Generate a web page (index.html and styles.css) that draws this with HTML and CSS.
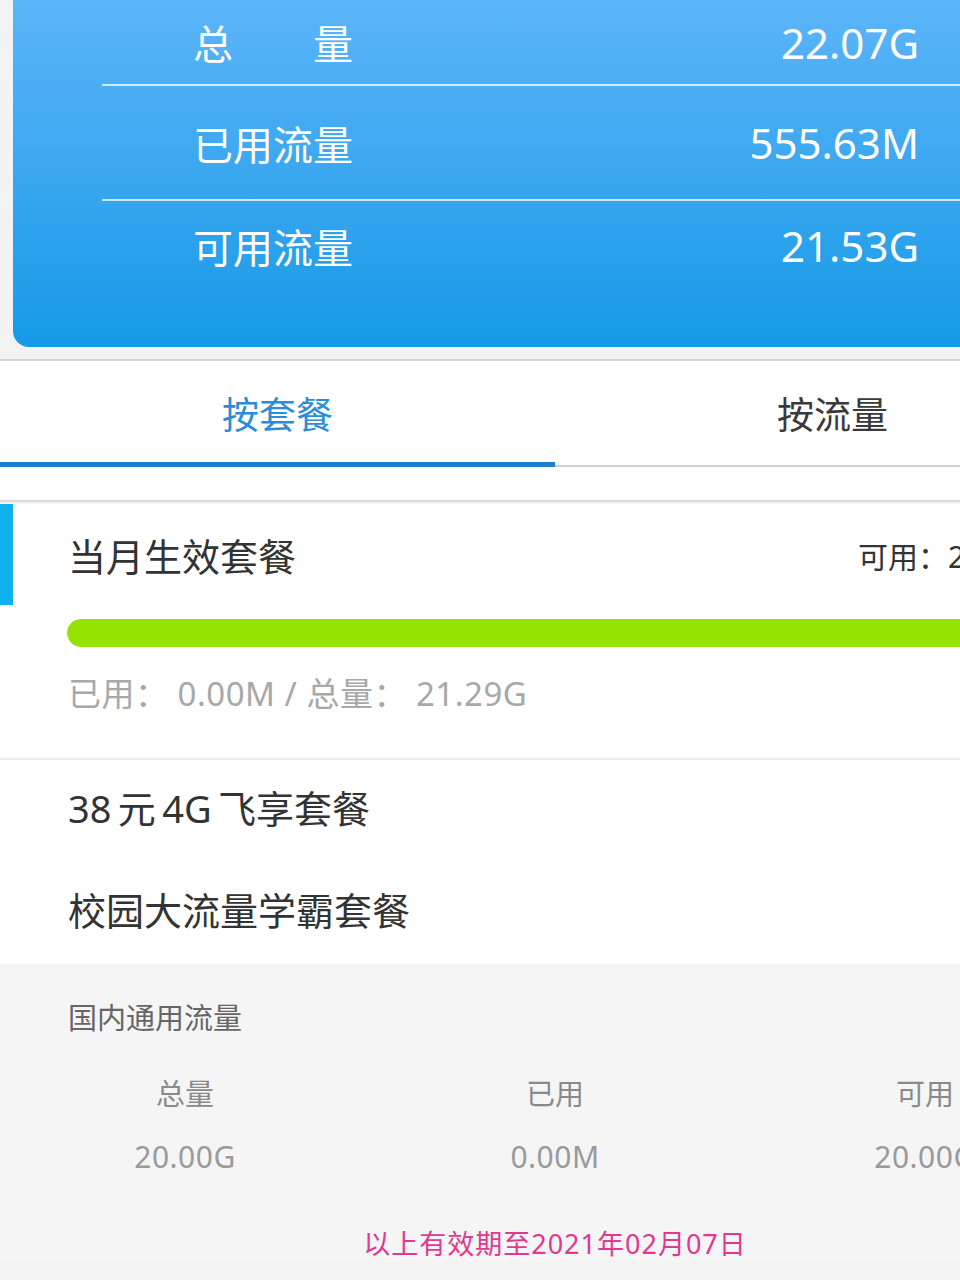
FILE: index.html
```html
<!DOCTYPE html>
<html lang="zh">
<head>
    <meta charset="UTF-8">
    <meta name="viewport" content="width=device-width, initial-scale=1.0">
    <title>流量查询</title>
    <link rel="stylesheet" href="styles.css">
</head>
<body>
    <div class="page">
        <!-- 顶部汇总卡片 -->
        <div class="summary">
            <div class="summary-card">
                <div class="stat-row stat-first">
                    <span class="stat-label">总　　量</span>
                    <span class="stat-value">22.07G</span>
                </div>
                <div class="stat-row stat-mid">
                    <span class="stat-label">已用流量</span>
                    <span class="stat-value">555.63M</span>
                </div>
                <div class="stat-row stat-last">
                    <span class="stat-label">可用流量</span>
                    <span class="stat-value">21.53G</span>
                </div>
            </div>
        </div>

        <!-- 切换标签 -->
        <div class="tabs">
            <div class="tab active">按套餐</div>
            <div class="tab">按流量</div>
        </div>
        <div class="tabs-gap"></div>

        <!-- 当月生效套餐 -->
        <div class="plan">
            <div class="plan-head">
                <span class="plan-title">当月生效套餐</span>
                <span class="plan-avail">可用：21.29G</span>
            </div>
            <div class="progress"><div class="progress-fill" style="width: 100%"></div></div>
            <div class="plan-detail">已用： 0.00M / 总量： 21.29G</div>
        </div>

        <div class="plan-list">
            <div class="plan-item">38&#x2006;元&#x2006;4G&#x2006;飞享套餐</div>
            <div class="plan-item">校园大流量学霸套餐</div>
        </div>

        <!-- 流量明细 -->
        <div class="detail">
            <div class="detail-title">国内通用流量</div>
            <div class="detail-grid">
                <div class="detail-label">总量</div>
                <div class="detail-label">已用</div>
                <div class="detail-label">可用</div>
                <div class="detail-value">20.00G</div>
                <div class="detail-value">0.00M</div>
                <div class="detail-value">20.00G</div>
            </div>
            <div class="expire">以上有效期至2021年02月07日</div>
        </div>
    </div>
</body>
</html>
```

FILE: styles.css
```css
* {
    margin: 0;
    padding: 0;
    box-sizing: border-box;
    font-family: 'Noto Sans', 'Noto Sans CJK SC', sans-serif;
}

:root {
    --blue: #2a8dd6;
    --text-dark: #333333;
    --text-gray: #a8a8a8;
    --bg-gray: #f3f3f3;
}

body {
    width: 960px;
    height: 1280px;
    overflow: hidden;
    background: var(--bg-gray);
}

.page {
    width: 1110px;
}

/* 顶部卡片 */
.summary {
    padding: 0 0 12px 13px;
    background: var(--bg-gray);
    border-bottom: 2px solid #d6d6d6;
}

.summary-card {
    background: linear-gradient(180deg, #5cb5f8 0%, #3aa7f0 50%, #169ae6 100%);
    border-radius: 0 0 16px 16px;
    padding: 0 0 57px 89px;
    color: #ffffff;
}

.stat-row {
    display: flex;
    justify-content: space-between;
    align-items: center;
    padding: 0 191px 0 91px;
}

.stat-first {
    height: 84px;
}

.stat-mid {
    height: 117px;
    border-top: 2px solid rgba(255, 255, 255, 0.75);
    border-bottom: 2px solid rgba(255, 255, 255, 0.75);
}

.stat-last {
    height: 89px;
}

.stat-label {
    font-size: 40px;
}

.stat-value {
    font-size: 42px;
}

/* 标签 */
.tabs {
    display: flex;
    background: #ffffff;
    height: 106px;
}

.tab {
    flex: 1;
    display: flex;
    align-items: center;
    justify-content: center;
    font-size: 37px;
    color: #3a3a3a;
    border-bottom: 2px solid #cfcfcf;
}

.tab.active {
    color: var(--blue);
    border-bottom: 5px solid #1b7fcf;
    padding-top: 3px;
}

.tabs-gap {
    height: 35px;
    background: #ffffff;
    border-bottom: 2px solid #dcdcdc;
}

/* 当月套餐 */
.plan {
    background: #ffffff;
    padding-bottom: 44px;
    border-bottom: 2px solid #ebebeb;
}

.plan-head {
    display: flex;
    justify-content: space-between;
    align-items: center;
    height: 101px;
    margin-top: 2px;
    padding: 0 0 0 55px;
    border-left: 13px solid #0fb2ee;
}

.plan-title {
    font-size: 38px;
    color: var(--text-dark);
}

.plan-avail {
    font-size: 30px;
    color: var(--text-dark);
    width: 252px;
}

.progress {
    margin: 14px 0 0 67px;
    height: 28px;
    border-radius: 14px;
    background: #eeeeee;
    overflow: hidden;
}

.progress-fill {
    height: 100%;
    background: #95e302;
    border-radius: 14px;
}

.plan-detail {
    margin: 27px 0 0 68px;
    font-size: 33px;
    line-height: 40px;
    letter-spacing: 0.5px;
    color: var(--text-gray);
}

.plan-list {
    background: #ffffff;
    padding: 0 0 0 68px;
    height: 204px;
}

.plan-item {
    font-size: 38px;
    color: var(--text-dark);
    height: 102px;
    padding-bottom: 10px;
    display: flex;
    align-items: center;
}

/* 明细 */
.detail {
    background: #f5f5f5;
    padding-top: 35px;
}

.detail-title {
    padding-left: 68px;
    font-size: 29px;
    line-height: 38px;
    color: #666666;
}

.detail-grid {
    display: grid;
    grid-template-columns: repeat(3, 1fr);
    row-gap: 25px;
    margin-top: 38px;
    text-align: center;
}

.detail-label,
.detail-value {
    font-size: 29px;
    line-height: 38px;
    color: #8a8a8a;
}

.detail-value {
    font-size: 30px;
    letter-spacing: 0.5px;
    color: #9a9a9a;
}

.expire {
    margin-top: 47px;
    text-align: center;
    font-size: 27px;
    letter-spacing: 1px;
    color: #e2388e;
}
```
